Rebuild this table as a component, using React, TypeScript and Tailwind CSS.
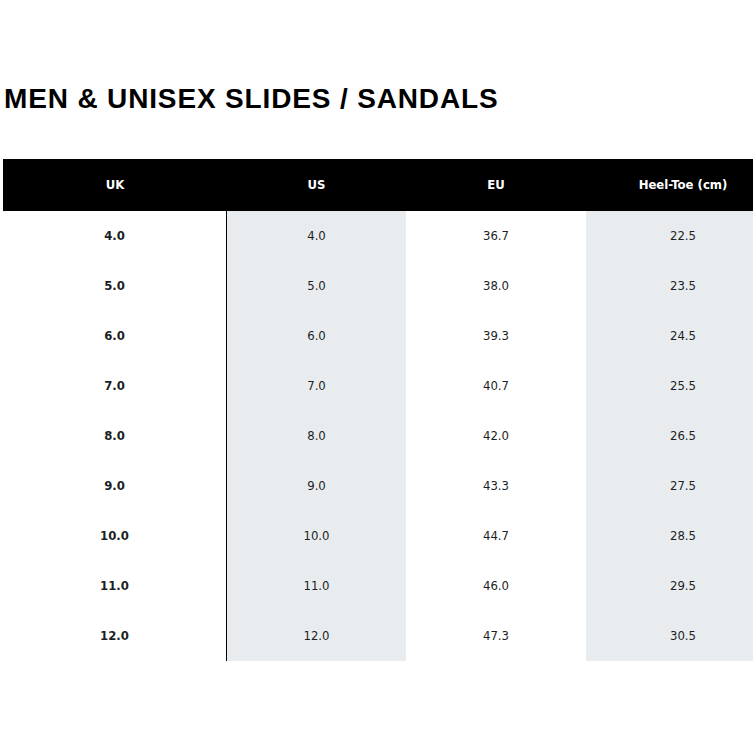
const rows = [
  ['4.0', '4.0', '36.7', '22.5'],
  ['5.0', '5.0', '38.0', '23.5'],
  ['6.0', '6.0', '39.3', '24.5'],
  ['7.0', '7.0', '40.7', '25.5'],
  ['8.0', '8.0', '42.0', '26.5'],
  ['9.0', '9.0', '43.3', '27.5'],
  ['10.0', '10.0', '44.7', '28.5'],
  ['11.0', '11.0', '46.0', '29.5'],
  ['12.0', '12.0', '47.3', '30.5'],
];

const headers = ['UK', 'US', 'EU', 'Heel-Toe (cm)'];

const grid = 'grid grid-cols-[224px_179px_180px_194px]';

export default function App() {
  return (
    <div className="min-h-[753px] w-[753px] overflow-hidden bg-white">
      <h1 className="pl-[4px] pt-[81px] font-['Liberation_Sans',Arial,sans-serif] text-[28px] font-bold leading-[36px] tracking-[0.85px] text-black">
        MEN &amp; UNISEX SLIDES / SANDALS
      </h1>

      {/* Size table */}
      <div className="mt-[42px] ml-[3px] w-[777px] font-['DejaVu_Sans_Condensed','DejaVu_Sans',sans-serif] text-[13px]">
        <div className={`${grid} h-[52px] items-center bg-black font-bold text-white`}>
          {headers.map((h) => (
            <div key={h} className="text-center">
              {h}
            </div>
          ))}
        </div>
        {rows.map((r) => (
          <div key={r[0]} className={`${grid} h-[50px] text-[#1b1f24]`}>
            <div className="flex items-center justify-center border-r border-black font-bold">{r[0]}</div>
            <div className="flex items-center justify-center bg-[#e9ecef]">{r[1]}</div>
            <div className="flex items-center justify-center">{r[2]}</div>
            <div className="flex items-center justify-center bg-[#e9ecef]">{r[3]}</div>
          </div>
        ))}
      </div>
    </div>
  );
}
